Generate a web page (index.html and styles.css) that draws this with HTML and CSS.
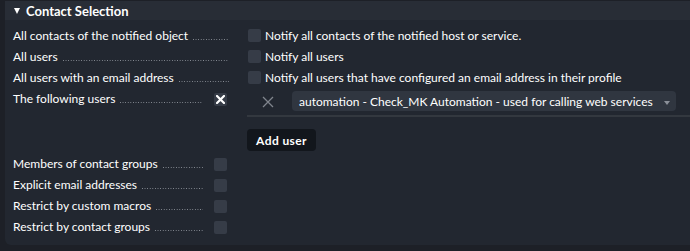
FILE: index.html
```html
<!DOCTYPE html>
<html>
<head>
<meta charset="utf-8">
<link rel="stylesheet" href="styles.css">
</head>
<body>
<div class="panel">
  <div class="header"><span class="tri"></span><span class="title">Contact Selection</span></div>
  <div class="body">
    <div class="row">
      <div class="label"><span class="ltext">All contacts of the notified object</span><span class="dots"></span></div>
      <div class="value"><span class="cb"></span><span class="vtext">Notify all contacts of the notified host or service.</span></div>
    </div>
    <div class="row">
      <div class="label"><span class="ltext">All users</span><span class="dots"></span></div>
      <div class="value"><span class="cb"></span><span class="vtext">Notify all users</span></div>
    </div>
    <div class="row">
      <div class="label"><span class="ltext">All users with an email address</span><span class="dots"></span></div>
      <div class="value"><span class="cb"></span><span class="vtext">Notify all users that have configured an email address in their profile</span></div>
    </div>
    <div class="row tall">
      <div class="label"><span class="ltext">The following users</span><span class="dots short"></span><span class="lcb checked"><svg width="9" height="9" viewBox="0 0 9 9"><path d="M1 1 L8 8 M8 1 L1 8" stroke="#fff" stroke-width="2.2" stroke-linecap="square"/></svg></span></div>
      <div class="value list">
        <div class="entry">
          <span class="del"><svg width="12" height="12" viewBox="0 0 12 12"><path d="M1 1 L11 11 M11 1 L1 11" stroke="#80858d" stroke-width="1.3"/></svg></span>
          <div class="select"><span class="stext">automation - Check_MK Automation - used for calling web services</span><span class="arrow"></span></div>
        </div>
        <div class="divider"></div>
        <button class="btn">Add user</button>
      </div>
    </div>
    <div class="row">
      <div class="label"><span class="ltext">Members of contact groups</span><span class="dots short"></span><span class="lcb"></span></div>
      <div class="value"></div>
    </div>
    <div class="row">
      <div class="label"><span class="ltext">Explicit email addresses</span><span class="dots short"></span><span class="lcb"></span></div>
      <div class="value"></div>
    </div>
    <div class="row">
      <div class="label"><span class="ltext">Restrict by custom macros</span><span class="dots short"></span><span class="lcb"></span></div>
      <div class="value"></div>
    </div>
    <div class="row">
      <div class="label"><span class="ltext">Restrict by contact groups</span><span class="dots short"></span><span class="lcb"></span></div>
      <div class="value"></div>
    </div>
  </div>
</div>
</body>
</html>
```
FILE: styles.css
```css
html, body {
  margin: 0;
  padding: 0;
  background: #1d2027;
  font-family: Lato, "Open Sans", sans-serif;
  color: #fff;
  overflow: hidden;
}
.panel {
  margin: 1px 0 0 5px;
  background: #222730;
  border-radius: 0 0 0 6px;
  height: 244px;
}
.header {
  height: 19px;
  background: #282d36;
  display: flex;
  align-items: center;
  padding-left: 9px;
  font-weight: bold;
  font-size: 13px;
}
.tri {
  width: 0;
  height: 0;
  border-left: 3.5px solid transparent;
  border-right: 3.5px solid transparent;
  border-top: 6px solid #fff;
  margin-right: 6px;
}
.body {
  padding: 5px 0 0 8px;
  font-size: 12px;
}
.row {
  display: grid;
  grid-template-columns: 216px 1fr;
  column-gap: 18px;
  min-height: 21px;
}
.label {
  display: flex;
  align-items: center;
  height: 21px;
  white-space: nowrap;
}
.dots {
  flex: 1;
  align-self: stretch;
  margin-left: 5px;
  background-image: linear-gradient(to right, #8a8f97 1px, transparent 1px);
  background-size: 2.6px 1px;
  background-repeat: repeat-x;
  background-position: left 14px;
}
.dots.short {
  margin-right: 11px;
}
.lcb {
  width: 13px;
  height: 13px;
  border-radius: 2px;
  background: #363c47;
  margin-right: 2px;
  margin-top: 2px;
  display: flex;
  align-items: center;
  justify-content: center;
}
.value {
  display: flex;
  align-items: center;
  height: 21px;
  white-space: nowrap;
}
.cb {
  width: 13px;
  height: 13px;
  border-radius: 2px;
  background: #363c47;
  margin: 0 4px 0 1px;
}
.value.list {
  display: block;
  height: auto;
}
.entry {
  display: flex;
  align-items: center;
  margin-top: 3px;
  height: 20px;
}
.del {
  width: 12px;
  height: 12px;
  margin: 2px 0 0 15px;
  display: flex;
}
.select {
  margin-left: 18px;
  width: 384px;
  height: 20px;
  background: #303640;
  border-radius: 4px;
  display: flex;
  align-items: center;
  padding-left: 7px;
  box-sizing: border-box;
}
.stext {
  flex: 1;
}
.arrow {
  width: 0;
  height: 0;
  border-left: 3.5px solid transparent;
  border-right: 3.5px solid transparent;
  border-top: 4px solid #8b9099;
  margin: 3px 6px 0 0;
}
.divider {
  height: 2px;
  background: #33383f;
  margin-top: 4px;
}
.btn {
  margin-top: 12px;
  margin-bottom: 2px;
  font-family: inherit;
  font-size: 12px;
  font-weight: bold;
  color: #fff;
  background: #12161c;
  border: none;
  border-radius: 4px;
  height: 22px;
  width: 69px;
  padding: 0;
  letter-spacing: 0.4px;
  display: block;
}
```
